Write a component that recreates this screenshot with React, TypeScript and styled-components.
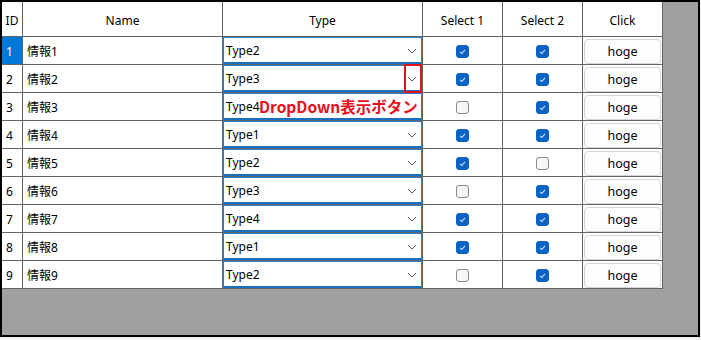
import React from "react";
import styled, { createGlobalStyle } from "styled-components";

const Global = createGlobalStyle`
  html, body { margin: 0; padding: 0; background: #f0f0f0; }
  body { font-family: "Noto Sans", "Noto Sans CJK JP", sans-serif; }
`;

const Frame = styled.div`
  box-sizing: border-box;
  width: 700px;
  height: 337px;
  border: 2px solid #000;
  background: #a0a0a0;
`;

const Table = styled.div`
  position: relative;
  display: grid;
  grid-template-columns: 21px 200px 200px 80px 80px 80px;
  grid-template-rows: 35px repeat(9, 28px);
  width: 661px;
  background: #fff;
  font-size: 12px;
  color: #000;
`;

const Cell = styled.div<{ $align?: "left" | "center"; $selected?: boolean; $head?: boolean }>`
  box-sizing: border-box;
  position: relative;
  display: flex;
  align-items: center;
  justify-content: ${(p) => (p.$align === "left" ? "flex-start" : "center")};
  padding-left: ${(p) => (p.$align === "left" ? "4px" : "0")};
  padding-top: ${(p) => (p.$head ? "3px" : p.$align === "left" ? "1px" : "0")};
  border-right: 1px solid #646464;
  border-bottom: 1px solid #646464;
  background: ${(p) => (p.$selected ? "#0078d7" : "transparent")};
  color: ${(p) => (p.$selected ? "#fff" : "#000")};
  white-space: nowrap;
`;

const Combo = styled.div`
  box-sizing: border-box;
  width: 100%;
  height: 100%;
  display: flex;
  align-items: center;
  justify-content: space-between;
  padding: 1px 4px 0 2px;
  border: 1px solid #2b7fd0;
  border-bottom: 2px solid #1a6fc4;
  background: #fff;
`;

const Chevron = () => (
  <svg width="10" height="6" viewBox="0 0 10 6">
    <polyline points="1,1 5,5 9,1" fill="none" stroke="#606060" strokeWidth="1" />
  </svg>
);

const Check = styled.div<{ $on: boolean }>`
  box-sizing: border-box;
  width: 13px;
  height: 13px;
  margin-top: 1px;
  border-radius: 3px;
  background: ${(p) => (p.$on ? "#0a63c2" : "#f6f6f6")};
  border: 1px solid ${(p) => (p.$on ? "#0a63c2" : "#8a8a8a")};
  display: flex;
  align-items: center;
  justify-content: center;
`;

const Tick = () => (
  <svg width="9" height="9" viewBox="0 0 9 9">
    <polyline points="2,4.8 3.8,6.5 7,2.8" fill="none" stroke="#cfe3f7" strokeWidth="1.1" />
  </svg>
);

const Button = styled.div`
  box-sizing: border-box;
  width: 77px;
  height: 25px;
  margin-top: 1px;
  display: flex;
  align-items: center;
  justify-content: center;
  border: 1px solid #d4d4d4;
  border-radius: 4px;
  background: #fdfdfd;
  font-size: 12.5px;
`;

const Marker = styled.div`
  position: absolute;
  right: 0px;
  top: -1px;
  width: 18px;
  height: 29px;
  box-sizing: border-box;
  border: 2px solid #e8101c;
`;

const Note = styled.div`
  position: absolute;
  left: 36px;
  top: 4px;
  color: #e8101c;
  font-family: "Noto Sans CJK JP", sans-serif;
  font-weight: 700;
  font-size: 15.5px;
  line-height: 18px;
  white-space: nowrap;
`;

const rows = [
  { t: "Type2", a: true, b: true },
  { t: "Type3", a: true, b: true },
  { t: "Type4", a: false, b: true },
  { t: "Type1", a: true, b: true },
  { t: "Type2", a: true, b: false },
  { t: "Type3", a: false, b: true },
  { t: "Type4", a: true, b: true },
  { t: "Type1", a: true, b: true },
  { t: "Type2", a: false, b: true },
];

export default function App() {
  return (
    <>
      <Global />
      <Frame>
        <Table>
          <Cell $head>ID</Cell>
          <Cell $head>Name</Cell>
          <Cell $head>Type</Cell>
          <Cell $head>Select 1</Cell>
          <Cell $head>Select 2</Cell>
          <Cell $head>Click</Cell>
          {rows.map((r, i) => (
            <React.Fragment key={i}>
              <Cell $align="left" $selected={i === 0}>{i + 1}</Cell>
              <Cell $align="left">情報{i + 1}</Cell>
              <Cell>
                <Combo>
                  <span>{r.t}</span>
                  {i !== 2 && <Chevron />}
                </Combo>
                {i === 1 && <Marker />}
                {i === 2 && <Note>DropDown表示ボタン</Note>}
              </Cell>
              <Cell>
                <Check $on={r.a}>{r.a && <Tick />}</Check>
              </Cell>
              <Cell>
                <Check $on={r.b}>{r.b && <Tick />}</Check>
              </Cell>
              <Cell>
                <Button>hoge</Button>
              </Cell>
            </React.Fragment>
          ))}
        </Table>
      </Frame>
    </>
  );
}
